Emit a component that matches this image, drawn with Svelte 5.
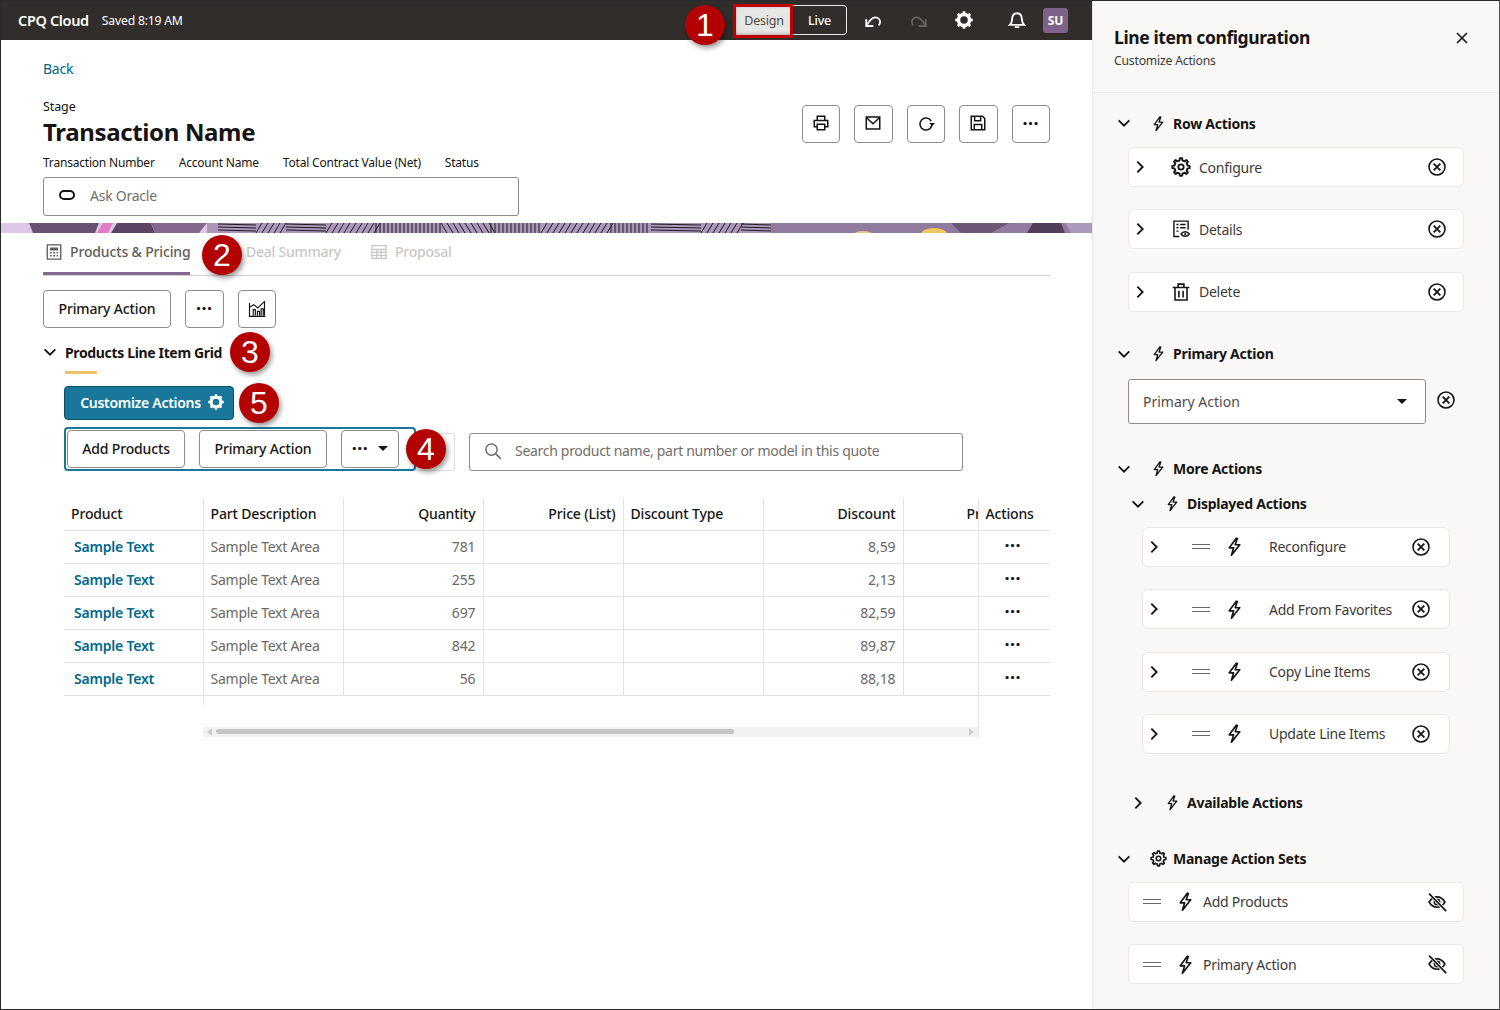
<script>
  const rows = [
    ['781', '8,59'],
    ['255', '2,13'],
    ['697', '82,59'],
    ['842', '89,87'],
    ['56', '88,18']
  ];
  const displayed = ['Reconfigure', 'Add From Favorites', 'Copy Line Items', 'Update Line Items'];
  const callouts = [
    { n: 1, x: 684, y: 4 },
    { n: 2, x: 201, y: 234 },
    { n: 3, x: 229, y: 331 },
    { n: 4, x: 405, y: 428 },
    { n: 5, x: 238, y: 382 }
  ];

  function gear(cx, cy, ro, ri, teeth) {
    let d = '';
    const step = (Math.PI * 2) / teeth;
    for (let i = 0; i < teeth; i++) {
      const a = i * step;
      const pts = [
        [ri, a - step * 0.5],
        [ri, a - step * 0.28],
        [ro, a - step * 0.17],
        [ro, a + step * 0.17],
        [ri, a + step * 0.28]
      ];
      for (const [r, t] of pts) {
        d += (d ? 'L' : 'M') + (cx + r * Math.cos(t)).toFixed(2) + ' ' + (cy + r * Math.sin(t)).toFixed(2);
      }
    }
    return d + 'Z';
  }
  const gearPath = gear(12, 12, 10.5, 8, 8);
  const gearSolid = gear(12, 12, 11.8, 9.6, 8) + 'M12 7a5 5 0 1 0 0 10a5 5 0 1 0 0-10Z';

  // hatch strip of the page banner
  function hatch() {
    const out = [];
    const blocks = [
      [217, 255, 'h'], [255, 285, 'd'], [285, 325, 'h'], [325, 375, 'd'], [375, 440, 'v'],
      [440, 490, 'b'], [490, 540, 'v'], [540, 610, 'd'], [610, 650, 'v'], [650, 700, 'h'],
      [700, 740, 'd'], [740, 770, 'h']
    ];
    for (const [a, b, kind] of blocks) {
      if (kind === 'h') {
        for (let y = 1; y < 10; y += 3) out.push(`M${a} ${y}L${b} ${y + 1}`);
      } else if (kind === 'v') {
        for (let x = a; x < b; x += 4) out.push(`M${x} 0L${x} 10`);
      } else if (kind === 'd') {
        for (let x = a; x < b; x += 6) out.push(`M${x} 10L${x + 6} 0`);
      } else {
        for (let x = a; x < b; x += 6) out.push(`M${x} 0L${x + 6} 10`);
      }
    }
    return out.join('');
  }
  const hatchPath = hatch();
</script>

<svg class="sprite" aria-hidden="true">
  <defs>
    <symbol id="bolt" viewBox="0 0 24 24"><path d="M14.5 2 6 13.5h5L8.5 22 18 10h-5.2L15.500 2" fill="none" stroke="currentColor" stroke-width="1.900" stroke-linejoin="round"/></symbol>
    <symbol id="gear" viewBox="0 0 24 24"><path d={gearPath} fill="none" stroke="currentColor" stroke-width="2.300" stroke-linejoin="round"/><circle cx="12" cy="12" r="3.200" fill="none" stroke="currentColor" stroke-width="2.200"/></symbol>
    <symbol id="gear-solid" viewBox="0 0 24 24"><path d={gearSolid} fill="currentColor" fill-rule="evenodd"/></symbol>
    <symbol id="chev-r" viewBox="0 0 24 24"><path d="m8 4 8 8-8 8" fill="none" stroke="currentColor" stroke-width="2.800"/></symbol>
    <symbol id="chev-d" viewBox="0 0 24 24"><path d="m4 8 8 8 8-8" fill="none" stroke="currentColor" stroke-width="2.800"/></symbol>
    <symbol id="x-circle" viewBox="0 0 24 24"><circle cx="12" cy="12" r="9.600" fill="none" stroke="currentColor" stroke-width="1.900"/><path d="m8 8 8 8m0-8-8 8" fill="none" stroke="currentColor" stroke-width="2.200"/></symbol>
    <symbol id="eye-off" viewBox="0 0 24 24"><path d="M2.500 12C5 7.800 8.200 5.800 12 5.800s7 2 9.500 6.200C19 16.200 15.800 18.200 12 18.200S5 16.200 2.500 12Z" fill="none" stroke="currentColor" stroke-width="1.900"/><circle cx="12" cy="12" r="3.200" fill="none" stroke="currentColor" stroke-width="1.900"/><path d="M3 1.500 22.500 23" stroke="#fff" stroke-width="4"/><path d="M2.500 2 23 23" stroke="currentColor" stroke-width="2"/></symbol>
    <symbol id="details" viewBox="0 0 24 24"><path d="M10 21H3.500V2.500h17V13" fill="none" stroke="currentColor" stroke-width="1.700"/><path d="M6.500 6.500h2.500M11 6.500h6.500M6.500 10.500h2.500M11 10.500h6.500M6.500 14.500h2.500" stroke="currentColor" stroke-width="1.700"/><path d="M12 18c2.500-3.600 7.500-3.600 10 0-2.500 3.600-7.500 3.600-10 0Z" fill="none" stroke="currentColor" stroke-width="1.600"/><circle cx="17" cy="18" r="1.300" fill="currentColor"/></symbol>
    <symbol id="trash" viewBox="0 0 24 24"><path d="M2 6.500h20M8.500 6V2.500h7V6M4.800 7v14.500h14.400V7M9.500 10.500v8M14.500 10.500v8" fill="none" stroke="currentColor" stroke-width="1.900"/></symbol>
    <symbol id="print" viewBox="0 0 24 24"><path d="M7 8V3h10v5M7 17H3V8.500h18V17h-4M7 13.500h10V21H7Z" fill="none" stroke="currentColor" stroke-width="2"/></symbol>
    <symbol id="mail" viewBox="0 0 24 24"><path d="M3 4h18v16H3ZM3.500 5 12 13l8.500-8" fill="none" stroke="currentColor" stroke-width="2"/></symbol>
    <symbol id="refresh" viewBox="0 0 24 24"><path d="M19 9.500A8 8 0 1 0 20 13" fill="none" stroke="currentColor" stroke-width="2"/><path d="m16 12 4.500 4 3.500-4Z" fill="currentColor"/></symbol>
    <symbol id="save" viewBox="0 0 24 24"><path d="M3 3h15l3 3v15H3ZM7.500 3.500V9h8V3.500M7 20.500V14h10v6.500" fill="none" stroke="currentColor" stroke-width="2"/></symbol>
    <symbol id="calc" viewBox="0 0 24 24"><path d="M3 2.500h18v19H3Z" fill="none" stroke="currentColor" stroke-width="1.800"/><path d="M6.500 6h11v4h-11Z" fill="currentColor"/><path d="M6.500 13h2.500M11 13h2.500M15.500 13h2M6.500 17h2.500M11 17h2.500M15.500 17h2" stroke="currentColor" stroke-width="2"/></symbol>
    <symbol id="table" viewBox="0 0 24 24"><path d="M2.500 3.500h19v17h-19ZM2.500 8.500h19M2.500 12.500h19M2.500 16.500h19M9 8.500v12M15 8.500v12" fill="none" stroke="currentColor" stroke-width="1.700"/></symbol>
    <symbol id="chart" viewBox="0 0 24 24"><path d="M3 6v16h19M7.500 21v-7h2.500v7M12.500 21v-5h2.500v5M17 21v-8h2.500v8M21 21V4" fill="none" stroke="currentColor" stroke-width="1.400"/><path d="m3 11 5-3 5 4 8-8" fill="none" stroke="currentColor" stroke-width="1.400"/></symbol>
    <symbol id="search" viewBox="0 0 24 24"><circle cx="10" cy="10" r="7.500" fill="none" stroke="currentColor" stroke-width="2"/><path d="m15.500 15.500 7 7" stroke="currentColor" stroke-width="2"/></symbol>
    <symbol id="undo" viewBox="0 0 24 24"><path d="M3 10.500V20h9.500M3.500 19.500C7 13 10.500 8.500 15 8.500c4 0 6.500 3 6.500 6 0 2-1 3.500-2 4.500" fill="none" stroke="currentColor" stroke-width="2.400"/></symbol>
    <symbol id="redo" viewBox="0 0 24 24"><path d="M21 10.500V20h-9.500M20.500 19.500C17 13 13.500 8.500 9 8.500c-4 0-6.500 3-6.500 6 0 2 1 3.500 2 4.500" fill="none" stroke="currentColor" stroke-width="2.400"/></symbol>
    <symbol id="bell" viewBox="0 0 24 24"><path d="M2.500 18.500c2.500-2 2.800-4.500 3-8C5.800 6 8.500 3 12 3s6.200 3 6.500 7.500c.2 3.500.5 6 3 8ZM9 21.500h6" fill="none" stroke="currentColor" stroke-width="2.400"/></symbol>
  </defs>
</svg>

<div class="shot">
  <div class="main">
    <header class="topbar">
      <span class="brand">CPQ Cloud</span>
      <span class="saved">Saved 8:19 AM</span>
      <div class="modes">
        <span class="mode design">Design</span>
        <span class="mode live">Live</span>
      </div>
      <svg class="ti undo"><use href="#undo" /></svg>
      <svg class="ti redo"><use href="#redo" /></svg>
      <svg class="ti cog"><use href="#gear-solid" /></svg>
      <svg class="ti bell"><use href="#bell" /></svg>
      <span class="avatar">SU</span>
    </header>

    <div class="page-head">
      <a class="back" href="#back">Back</a>
      <div class="title-row">
        <div>
          <div class="stage">Stage</div>
          <h1>Transaction Name</h1>
        </div>
        <div class="head-btns">
          <button class="btn icon-btn"><svg class="i18"><use href="#print" /></svg></button>
          <button class="btn icon-btn"><svg class="i18"><use href="#mail" /></svg></button>
          <button class="btn icon-btn"><svg class="i18"><use href="#refresh" /></svg></button>
          <button class="btn icon-btn"><svg class="i18"><use href="#save" /></svg></button>
          <button class="btn icon-btn"><span class="dots">···</span></button>
        </div>
      </div>
      <div class="meta">
        <span>Transaction Number</span>
        <span>Account Name</span>
        <span>Total Contract Value (Net)</span>
        <span>Status</span>
      </div>
      <div class="ask">
        <span class="oval"></span>
        <span>Ask Oracle</span>
      </div>
    </div>

    <svg class="banner" viewBox="0 0 1091 10" preserveAspectRatio="none">
      <rect width="1091" height="10" fill="#dcc8e6" />
      <path d="M28 0H98L94 10H32Z" fill="#6a5273" />
      <path d="M102 0H112L107 10H96Z" fill="#e07cc6" />
      <path d="M116 0H150L154 10H110Z" fill="#5b4565" />
      <path d="M150 0H206L198 10H154Z" fill="#86688f" />
      <rect x="206" width="570" height="10" fill="#ab95b8" />
      <path d={hatchPath} stroke="#1f1a22" stroke-width="1" fill="none" />
      <rect x="770" width="321" height="10" fill="#917a9f" />
      <path d="M950 0H1008L990 10H960Z" fill="#6d5777" />
      <path d="M1032 0H1060L1064 10H1026Z" fill="#4f3d59" />
      <path d="M1064 0H1091V10H1070Z" fill="#ac98bd" />
      <ellipse cx="933" cy="11" rx="13" ry="6" fill="#f0c860" />
      <ellipse cx="862" cy="12" rx="10" ry="4" fill="#e6c77e" />
    </svg>

    <div class="workspace">
      <div class="tabs">
        <div class="tab active"><svg class="i18"><use href="#calc" /></svg>Products &amp; Pricing</div>
        <div class="tab off deal">Deal Summary</div>
        <div class="tab off"><svg class="i18"><use href="#table" /></svg>Proposal</div>
      </div>

      <div class="tools">
        <button class="btn text-btn">Primary Action</button>
        <button class="btn icon-btn"><span class="dots">···</span></button>
        <button class="btn icon-btn"><svg class="i20"><use href="#chart" /></svg></button>
      </div>

      <div class="grid-area">
        <div class="grid-title">
          <svg class="i12 caret"><use href="#chev-d" /></svg>
          <span>Products Line Item Grid</span>
        </div>
        <div class="accent"></div>
        <button class="customize">Customize Actions <svg class="i16"><use href="#gear-solid" /></svg></button>

        <div class="action-row">
          <div class="action-set">
            <button class="btn set-btn">Add Products</button>
            <button class="btn set-btn">Primary Action</button>
            <button class="btn more-btn"><span class="dots">···</span><span class="tri"></span></button>
          </div>
          <div class="ghost"></div>
          <div class="search">
            <svg class="i18"><use href="#search" /></svg>
            <span>Search product name, part number or model in this quote</span>
          </div>
        </div>

        <table>
          <colgroup>
            <col class="c139" /><col class="c140" /><col class="c140" /><col class="c140" /><col class="c140" /><col class="c140" /><col class="c75" /><col />
          </colgroup>
          <thead>
            <tr>
              <th class="first">Product</th>
              <th>Part Description</th>
              <th class="num">Quantity</th>
              <th class="num">Price (List)</th>
              <th>Discount Type</th>
              <th class="num">Discount</th>
              <th class="clip"><span>Price (Net)</span></th>
              <th>Actions</th>
            </tr>
          </thead>
          <tbody>
            {#each rows as [qty, disc]}
              <tr>
                <td class="link">Sample Text</td>
                <td>Sample Text Area</td>
                <td class="num">{qty}</td>
                <td></td>
                <td></td>
                <td class="num">{disc}</td>
                <td></td>
                <td class="act"><span class="dots">···</span></td>
              </tr>
            {/each}
          </tbody>
        </table>

        <div class="tail">
          <div class="tick"></div>
          <div class="scrollbar">
            <span class="arr left"></span>
            <span class="thumb"></span>
            <span class="arr right"></span>
          </div>
        </div>
      </div>
    </div>
  </div>

  <aside class="panel">
    <div class="panel-head">
      <div>
        <h2>Line item configuration</h2>
        <p>Customize Actions</p>
      </div>
      <svg class="i14 close" viewBox="0 0 14 14"><path d="m2 2 10 10M12 2 2 12" stroke="currentColor" stroke-width="1.600" /></svg>
    </div>

    <div class="panel-body">
      <div class="sec">
        <svg class="i12"><use href="#chev-d" /></svg>
        <svg class="sec-i"><use href="#bolt" /></svg>
        <span>Row Actions</span>
      </div>
      <div class="cards">
        <div class="card">
          <svg class="i12 cr"><use href="#chev-r" /></svg>
          <svg class="i20 ci"><use href="#gear" /></svg>
          <span class="lbl">Configure</span>
          <svg class="i20 end"><use href="#x-circle" /></svg>
        </div>
        <div class="card">
          <svg class="i12 cr"><use href="#chev-r" /></svg>
          <svg class="i20 ci"><use href="#details" /></svg>
          <span class="lbl">Details</span>
          <svg class="i20 end"><use href="#x-circle" /></svg>
        </div>
        <div class="card">
          <svg class="i12 cr"><use href="#chev-r" /></svg>
          <svg class="i20 ci"><use href="#trash" /></svg>
          <span class="lbl">Delete</span>
          <svg class="i20 end"><use href="#x-circle" /></svg>
        </div>
      </div>

      <div class="sec gap30">
        <svg class="i12"><use href="#chev-d" /></svg>
        <svg class="sec-i"><use href="#bolt" /></svg>
        <span>Primary Action</span>
      </div>
      <div class="select-row">
        <div class="select"><span>Primary Action</span><span class="tri"></span></div>
        <svg class="i20"><use href="#x-circle" /></svg>
      </div>

      <div class="sec gap33">
        <svg class="i12"><use href="#chev-d" /></svg>
        <svg class="sec-i"><use href="#bolt" /></svg>
        <span>More Actions</span>
      </div>
      <div class="sec nested gap11">
        <svg class="i12"><use href="#chev-d" /></svg>
        <svg class="sec-i"><use href="#bolt" /></svg>
        <span>Displayed Actions</span>
      </div>
      <div class="cards nested-cards">
        {#each displayed as label}
          <div class="card">
            <svg class="i12 cr"><use href="#chev-r" /></svg>
            <span class="drag d1"></span>
            <svg class="bolt-lg b1"><use href="#bolt" /></svg>
            <span class="lbl">{label}</span>
            <svg class="i20 end e2"><use href="#x-circle" /></svg>
          </div>
        {/each}
      </div>
      <div class="sec nested gap37">
        <svg class="i12"><use href="#chev-r" /></svg>
        <svg class="sec-i"><use href="#bolt" /></svg>
        <span>Available Actions</span>
      </div>

      <div class="sec gap32">
        <svg class="i12"><use href="#chev-d" /></svg>
        <svg class="sec-i"><use href="#gear" /></svg>
        <span>Manage Action Sets</span>
      </div>
      <div class="cards manage">
        {#each ['Add Products', 'Primary Action'] as label}
          <div class="card">
            <span class="drag d2"></span>
            <svg class="bolt-lg b2"><use href="#bolt" /></svg>
            <span class="lbl">{label}</span>
            <svg class="i20 end"><use href="#eye-off" /></svg>
          </div>
        {/each}
      </div>
    </div>
  </aside>

  <!-- annotations drawn over the screenshot -->
  <div class="redbox"></div>
  {#each callouts as c}
    <div class="callout" style="left:{c.x}px;top:{c.y}px">{c.n}</div>
  {/each}
</div>

<style>
  :global(body) {
    margin: 0;
    background: #fff;
  }

  .sprite {
    position: absolute;
    width: 0;
    height: 0;
  }

  .shot {
    position: relative;
    box-sizing: border-box;
    width: 1500px;
    height: 1010px;
    display: flex;
    overflow: hidden;
    border: 1px solid #2a2a2a;
    border-right-color: #555;
    font-family: "Noto Sans", sans-serif;
    font-size: 14px;
    letter-spacing: -0.25px;
    color: #161513;
  }

  svg {
    display: block;
    flex: none;
  }
  .i12 { width: 16px; height: 16px; margin: 0 -2px; }
  .i14 { width: 14px; height: 14px; }
  .i16 { width: 16px; height: 16px; }
  .i18 { width: 18px; height: 18px; }
  .i20 { width: 20px; height: 20px; }

  .main {
    width: 1091px;
    flex: none;
    background: #fff;
  }

  /* top bar */
  .topbar {
    box-sizing: border-box;
    height: 39px;
    background: #312d2a;
    color: #fff;
    display: flex;
    align-items: center;
    padding: 0 24px 1px 17px;
  }
  .brand {
    font-size: 14.5px;
    font-weight: 600;
    letter-spacing: -0.35px;
  }
  .saved {
    font-size: 12.2px;
    margin-left: 13px;
    letter-spacing: -0.2px;
  }
  .modes {
    display: flex;
    margin-left: auto;
    height: 30px;
  }
  .mode {
    display: flex;
    align-items: center;
    justify-content: center;
    font-size: 12.5px;
    box-sizing: border-box;
  }
  .design {
    width: 58px;
    background: #e6e6e4;
    color: #4f4c4a;
    box-shadow: inset 0 0 4px #8b8b8b;
  }
  .live {
    width: 54px;
    border: 1px solid #e8e8e8;
    border-left: none;
    border-radius: 0 4px 4px 0;
    font-weight: 500;
  }
  .ti {
    width: 18px;
    height: 18px;
  }
  .undo { margin-left: 17px; }
  .redo { margin-left: 28px; color: #65615e; }
  .cog { margin-left: 27px; }
  .bell { margin-left: 35px; }
  .avatar {
    margin-left: 17px;
    width: 25px;
    height: 25px;
    border-radius: 3px;
    background: #7c6387;
    display: flex;
    align-items: center;
    justify-content: center;
    font-size: 12px;
    font-weight: 700;
    letter-spacing: 0;
  }

  /* page heading */
  .page-head {
    padding: 19px 42px 0 42px;
    height: 183px;
    box-sizing: border-box;
  }
  .back {
    display: block;
    color: #00688c;
    text-decoration: none;
    line-height: 20px;
  }
  .title-row {
    display: flex;
    justify-content: space-between;
    margin-top: 20px;
  }
  .stage {
    font-size: 12.5px;
    line-height: 16px;
    letter-spacing: -0.1px;
  }
  h1 {
    margin: 0;
    font-size: 24px;
    line-height: 33px;
    font-weight: 700;
    letter-spacing: -0.35px;
  }
  .head-btns {
    display: flex;
    gap: 14px;
    margin-top: 6px;
  }
  .btn {
    box-sizing: border-box;
    height: 38px;
    border: 1px solid #8f8c89;
    border-radius: 4px;
    background: #fff;
    color: #161513;
    font: inherit;
    font-weight: 500;
    letter-spacing: -0.15px;
    padding: 0 0 2px;
    display: flex;
    align-items: center;
    justify-content: center;
  }
  .icon-btn { width: 38.5px; }
  .dots {
    font-weight: 700;
    font-size: 18px;
    line-height: 14px;
    letter-spacing: 0.5px;
    height: 16px;
    margin-top: 1px;
  }
  .meta {
    display: flex;
    gap: 24px;
    font-size: 12px;
    line-height: 18px;
    margin-top: 6px;
    letter-spacing: -0.2px;
  }
  .ask {
    box-sizing: border-box;
    margin-top: 5px;
    width: 476px;
    height: 39px;
    border: 1px solid #8f8c89;
    border-radius: 3px;
    display: flex;
    align-items: center;
    color: #716e6b;
    padding: 0 0 2px 15px;
  }
  .oval {
    box-sizing: border-box;
    width: 16px;
    height: 10px;
    border: 2px solid #161513;
    border-radius: 5px;
    margin-right: 15px;
    margin-top: -2px;
  }

  .banner {
    width: 1091px;
    height: 10px;
  }

  .workspace {
    padding: 0 42px;
  }

  .tabs {
    display: flex;
    height: 43px;
    border-bottom: 1px solid #d2d1cf;
    box-sizing: border-box;
  }
  .tab {
    display: flex;
    align-items: center;
    gap: 7px;
    height: 37px;
    color: #5f5c59;
    font-weight: 500;
    white-space: nowrap;
  }
  .tab.active {
    width: 147px;
    padding: 0 0 2px 2px;
    box-sizing: border-box;
    height: 42px;
    border-bottom: 3px solid #86688f;
    letter-spacing: -0.15px;
    flex: none;
  }
  .tab.off {
    color: #c9c7c5;
  }
  .tab.deal {
    margin-left: 56px;
    margin-right: 29px;
  }

  .tools {
    display: flex;
    gap: 14px;
    margin-top: 14px;
  }
  .text-btn { width: 128px; }

  .grid-area {
    margin-top: 14px;
  }
  .grid-title {
    display: flex;
    align-items: center;
    font-weight: 700;
    height: 22px;
    padding-bottom: 2px;
    box-sizing: border-box;
    letter-spacing: -0.35px;
  }
  .caret {
    margin-right: 7px;
    margin-left: -1px;
  }
  .accent {
    width: 32px;
    height: 3px;
    background: #eac46c;
    margin: 7px 0 0 22px;
  }
  .customize {
    box-sizing: border-box;
    margin: 12px 0 0 21px;
    width: 170px;
    height: 34px;
    border: 1px solid #0b4f66;
    border-radius: 4px;
    background: #18779a;
    color: #fff;
    font: inherit;
    font-weight: 600;
    letter-spacing: -0.3px;
    display: flex;
    align-items: center;
    justify-content: center;
    gap: 7px;
    padding: 0 0 2px 6px;
  }

  .action-row {
    display: flex;
    align-items: flex-start;
    margin: 7px 0 0 21px;
  }
  .action-set {
    box-sizing: border-box;
    width: 352px;
    height: 44px;
    display: flex;
    align-items: center;
    gap: 14px;
    padding-left: 1px;
    border: 2px solid #18779a;
    border-radius: 4px;
    background: #fff;
    position: relative;
  }
  .set-btn {
    width: 118px;
    height: 38px;
  }
  .set-btn + .set-btn {
    width: 128px;
  }
  .more-btn {
    width: 58px;
    height: 38px;
    gap: 10px;
  }
  .tri {
    width: 0;
    height: 0;
    border-left: 5px solid transparent;
    border-right: 5px solid transparent;
    border-top: 5px solid #161513;
  }
  .ghost {
    box-sizing: border-box;
    width: 40px;
    height: 38px;
    margin-left: -1px;
    margin-top: 6px;
    border: 1px solid #e0dfdd;
    border-left: none;
    border-radius: 0 3px 3px 0;
  }
  .search {
    box-sizing: border-box;
    margin: 6px 0 0 14px;
    width: 494px;
    height: 38px;
    border: 1px solid #8f8c89;
    border-radius: 3px;
    display: flex;
    align-items: center;
    gap: 13px;
    padding: 0 0 3px 14px;
    color: #716e6b;
    letter-spacing: -0.3px;
  }

  table {
    border-collapse: collapse;
    table-layout: fixed;
    width: 986px;
    margin: 27px 0 0 21px;
  }
  .c139 { width: 139px; }
  .c140 { width: 140px; }
  .c75 { width: 75px; }
  th, td {
    box-sizing: border-box;
    padding: 0 7px;
    text-align: left;
    border-right: 1px solid #e3e2e0;
    border-bottom: 1px solid #e3e2e0;
    white-space: nowrap;
    overflow: hidden;
  }
  th {
    height: 32px;
    font-weight: 500;
    letter-spacing: -0.15px;
  }
  td {
    height: 33px;
    color: #6a6764;
  }
  th:last-child, td:last-child {
    border-right: none;
  }
  .num {
    text-align: right;
  }
  td.num {
    letter-spacing: -0.1px;
  }
  .link {
    color: #00688c;
    font-weight: 600;
    padding-left: 10px;
    letter-spacing: -0.2px;
  }
  .clip span {
    display: block;
    margin-left: 56px;
    width: 12px;
    overflow: hidden;
  }
  .act {
    text-align: center;
    padding: 0 3px 0 0;
    color: #161513;
  }
  .act .dots {
    display: inline-block;
  }

  .tail {
    margin-left: 160px;
    width: 775px;
    height: 41px;
    border-right: 1px solid #e3e2e0;
  }
  .tick {
    width: 1px;
    height: 9px;
    background: #e3e2e0;
  }
  .scrollbar {
    margin-top: 22px;
    height: 10px;
    background: #f2f1f0;
    display: flex;
    align-items: center;
    padding: 0 4px;
    gap: 4px;
  }
  .thumb {
    width: 518px;
    height: 5px;
    border-radius: 3px;
    background: #c5c4c3;
  }
  .arr {
    width: 0;
    height: 0;
    border-top: 4px solid transparent;
    border-bottom: 4px solid transparent;
  }
  .arr.left { border-right: 5px solid #cfcecd; }
  .arr.right { border-left: 5px solid #cfcecd; margin-left: auto; }

  /* side panel */
  .panel {
    flex: 1;
    box-sizing: border-box;
    background: #f9f8f6;
    border-left: 1px solid #e6e5e3;
    min-width: 0;
  }
  .panel-head {
    box-sizing: border-box;
    height: 92px;
    border-bottom: 1px solid #eeedeb;
    padding: 23px 30px 0 21px;
    display: flex;
    justify-content: space-between;
  }
  h2 {
    margin: 0;
    font-size: 17.5px;
    line-height: 26px;
    font-weight: 700;
    letter-spacing: -0.4px;
  }
  .panel-head p {
    margin: 2px 0 0;
    font-size: 12.2px;
    line-height: 17px;
    color: #3c3a38;
    letter-spacing: -0.2px;
  }
  .close {
    margin-top: 7px;
  }

  .panel-body {
    padding: 18px 35px 0 25px;
  }
  .sec {
    display: flex;
    align-items: center;
    height: 24px;
    font-weight: 700;
    letter-spacing: -0.25px;
  }
  .sec-i {
    width: 17px;
    height: 17px;
    margin: 0 6px 0 20px;
  }
  .gap30 { margin-top: 30px; }
  .gap33 { margin-top: 33px; }
  .gap11 { margin-top: 11px; }
  .gap37 { margin-top: 37px; }
  .gap32 { margin-top: 32px; }
  .nested {
    padding-left: 14px;
  }

  .cards {
    display: flex;
    flex-direction: column;
    gap: 22.4px;
    margin: 12px 0 0 10px;
  }
  .nested-cards {
    margin: 11px 14px 0 24px;
  }
  .cards.manage {
    margin-top: 11px;
  }
  .card {
    box-sizing: border-box;
    height: 40px;
    background: #fff;
    border: 1px solid #ebe9e7;
    border-radius: 6px;
    display: flex;
    align-items: center;
    color: #3c3a38;
    padding: 0 16px 0 5px;
  }
  .card .end {
    margin-left: auto;
    color: #161513;
  }
  .cr { color: #161513; }
  .ci {
    margin: 0 8px 0 25px;
    color: #161513;
  }
  .drag {
    width: 18px;
    height: 5px;
    border-top: 1.5px solid #6a6764;
    border-bottom: 1.5px solid #6a6764;
    box-sizing: border-box;
  }
  .bolt-lg {
    width: 21px;
    height: 21px;
    color: #161513;
  }
  .d1 { margin-left: 32px; }
  .b1 { margin: 0 24.5px 0 13.5px; }
  .e2 { margin-right: 2px; }
  .d2 { margin-left: 9px; }
  .b2 { margin: 0 7.5px 0 13.5px; }

  .select-row {
    display: flex;
    align-items: center;
    gap: 10px;
    margin: 13px 0 0 10px;
  }
  .select {
    box-sizing: border-box;
    width: 298px;
    height: 45px;
    border: 1px solid #8f8c89;
    border-radius: 3px;
    background: #fff;
    display: flex;
    align-items: center;
    justify-content: space-between;
    padding: 1px 18px 0 14px;
    color: #4f4c4a;
    letter-spacing: 0;
  }
  .select-row > svg {
    margin-top: -3px;
  }

  /* annotations */
  .redbox {
    position: absolute;
    left: 732px;
    top: 3px;
    width: 60px;
    height: 34px;
    border: 3px solid #c00000;
    box-sizing: border-box;
  }
  .callout {
    position: absolute;
    width: 40px;
    height: 40px;
    border-radius: 50%;
    background: #b30000;
    color: #fff;
    font-family: "Liberation Sans", sans-serif;
    font-size: 32px;
    line-height: 40px;
    letter-spacing: 0;
    text-align: center;
    box-shadow: 2px 3px 5px rgba(0, 0, 0, 0.4);
  }
</style>
